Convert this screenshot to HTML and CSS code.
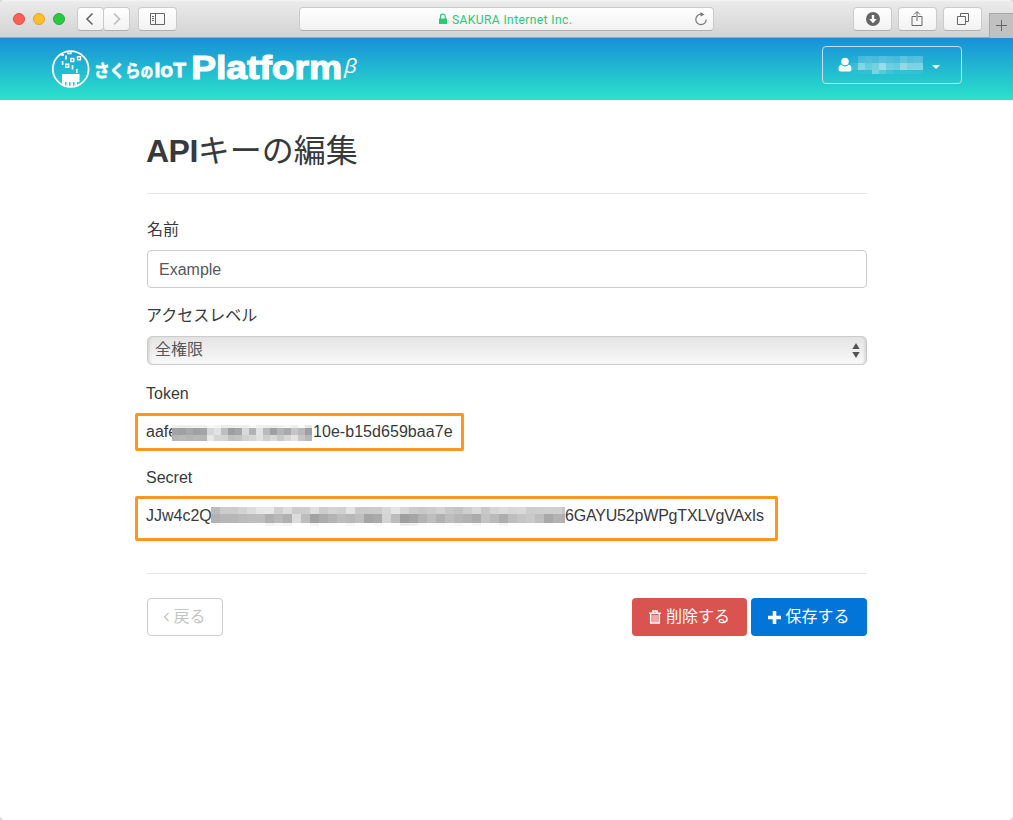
FILE: index.html
```html
<!DOCTYPE html>
<html lang="ja">
<head>
<meta charset="utf-8">
<title>APIキーの編集</title>
<link rel="stylesheet" href="styles.css">
</head>
<body>
<div class="window">
  <div class="toolbar">
    <div class="lights"><i class="light red"></i><i class="light amber"></i><i class="light green"></i></div>
    <div class="history">
      <span class="tool nav"><svg width="24" height="22"><path d="M14.500 5.500 9 11l5.500 5.500" fill="none" stroke="#666" stroke-width="1.600"/></svg></span>
      <span class="tool nav"><svg width="24" height="22"><path d="M10 5.500 15.500 11 10 16.500" fill="none" stroke="#bbb" stroke-width="1.600"/></svg></span>
    </div>
    <span class="tool"><svg width="37" height="22"><g fill="none" stroke="#666"><path d="M11.500 5.500h14v11h-14zM16.500 5.500v11M13 8.500h2M13 10.500h2M13 12.500h2"/></g></svg></span>
    <div class="address">
      <svg width="10" height="12" class="lock"><path d="M2.500 6V3.500a2.400 2.400 0 0 1 4.800 0V6" fill="none" stroke="#28c878" stroke-width="1.200"/><path d="M1 5.500h8V11H1z" fill="#28c878"/></svg>
      <span>SAKURA Internet Inc.</span>
      <svg width="14" height="14" class="reload"><path d="M7 2.200a5.200 5.200 0 1 0 5.200 5.200" fill="none" stroke="#777" stroke-width="1.200"/><path d="M6.500 0v4.600L10.500 2.400z" fill="#777"/></svg>
    </div>
    <div class="actions">
      <span class="tool"><svg width="37" height="22"><circle cx="19" cy="11" r="7" fill="#666"/><path d="M17.800 7h2.400v4h2.600L19 15.200 15.200 11h2.600z" fill="#fff"/></svg></span>
      <span class="tool"><svg width="37" height="22"><path d="M17 8.500h-4v9h10v-9h-4M18 13V4M15 6.500l3-3 3 3" fill="none" stroke="#666"/></svg></span>
      <span class="tool"><svg width="37" height="22"><path d="M13.500 8.500h8v8h-8zM16.500 8.500v-3h8v8h-3" fill="none" stroke="#666"/></svg></span>
    </div>
    <span class="newtab"><svg width="24" height="24"><path d="M6 11.500h11M11.500 6v11" stroke="#666" fill="none"/></svg></span>
  </div>

  <header class="site-header">
    <svg class="logo" width="310" height="42" viewBox="50 48 310 42">
      <clipPath id="disc"><circle cx="70.700" cy="69" r="18"/></clipPath>
      <g clip-path="url(#disc)" fill="#fff">
        <path d="M62 74h17.500v8H77v5h-2.500v-5H73v5h-2.500v-5H69v5h-2.500v-5H65v5h-2.500l-.500-5z"/>
        <path d="M61.800 61h1.600v4h-1.600zM65 55.500h1.800v4H65zM71.700 65h1.600v4.500h-1.600zM76 69h1.600v4H76z"/>
        <path d="M61 54h3v1.800h-3z"/>
      </g>
      <g clip-path="url(#disc)" fill="none" stroke="#fff" stroke-width="1.400"><path d="M65.700 64.200h3v3h-3zM70.800 58.500h3v3h-3zM77.500 56.700h3v3h-3zM68 50.500h3v3h-3z"/></g>
      <circle cx="70.700" cy="69" r="17.900" fill="none" stroke="#fff" stroke-width="1.800"/>
      <g fill="#fff">
        <text class="logo-jp" x="94" y="77" font-size="17" textLength="59" lengthAdjust="spacingAndGlyphs">さくら<tspan font-size="13.500">の</tspan></text>
        <text class="logo-iot" x="154.500" y="77" font-size="20.500" textLength="31.500" lengthAdjust="spacingAndGlyphs">IoT</text>
        <text class="logo-name" x="191.200" y="79.300" font-size="34" textLength="151" lengthAdjust="spacingAndGlyphs">Platform</text>
        <text class="logo-beta" x="344" y="73" font-size="20" textLength="13" lengthAdjust="spacingAndGlyphs">β</text>
      </g>
    </svg>
    <div class="account">
      <svg width="14" height="16"><circle cx="7" cy="4.500" r="3.800" fill="#fff"/><path d="M3.300 7.500C1 8 .500 10 .500 12.500q0 2 2 2h9q2 0 2-2C13.500 10 13 8 10.700 7.500 9 10 5 10 3.300 7.500z" fill="#fff"/></svg>
      <svg class="mosaic" data-mosaic="user" width="72" height="19"></svg>
      <i class="caret"></i>
    </div>
  </header>

  <main class="content">
    <h1><b>API</b>キーの編集</h1>
    <form class="fields">
      <label class="label jp">名前</label>
      <div class="input">Example</div>
      <label class="label jp level">アクセスレベル</label>
      <div class="select"><span>全権限</span><svg width="8" height="15"><path d="M4 0l3.700 6H.300zM.300 9h7.400L4 15z" fill="#555"/></svg></div>
      <label class="label token-label">Token</label>
      <div class="code token"><span class="head">aafe</span><svg class="mosaic" data-mosaic="token" width="140" height="16"></svg><span class="tail">10e-b15d659baa7e</span></div>
      <label class="label secret-label">Secret</label>
      <div class="code secret"><span class="head">JJw4c2Q</span><svg class="mosaic" data-mosaic="secret" width="354" height="20"></svg><span class="tail">6GAYU52pWPgTXLVgVAxIs</span></div>
    </form>
    <div class="buttons">
      <a class="btn back"><svg width="7" height="12"><path d="M5.500 2 1.500 6l4 4" fill="none" stroke="#c4c4c4" stroke-width="1.300"/></svg>戻る</a>
      <a class="btn delete"><svg width="12" height="14"><path d="M4 2.500V1h4v1.500M0 3.300h12M1.700 4v9h8.600V4" fill="none" stroke="#fff" stroke-width="1.500"/><path d="M4 5v7M6 5v7M8 5v7" stroke="#fff" stroke-width="1"/></svg>削除する</a>
      <a class="btn save"><svg width="13" height="13"><path d="M6.500 0v13M0 6.500h13" stroke="#fff" stroke-width="3.600"/></svg>保存する</a>
    </div>
  </main>
</div>
<script src="mosaic.js"></script>
</body>
</html>
```
FILE: styles.css
```css
* { box-sizing: border-box; }
body {
  margin: 0;
  background: #d8d8d8;
  color: #373a3c;
  font: 16px/24px "Liberation Sans", "Noto Sans CJK JP", sans-serif;
}
svg { display: block; flex: none; }
.window {
  height: 820px;
  background: #fff;
  border-radius: 5px;
  overflow: hidden;
}
.toolbar {
  display: flex;
  align-items: flex-start;
  height: 38px;
  padding: 7px 0 0 13px;
  background: linear-gradient(#f6f6f6 0, #eaeaeb 2px, #d3d3d3 37px);
  border-bottom: 1px solid #a6a6a8;
}
.lights { display: flex; gap: 8px; padding-top: 6px; width: 64px; }
.light { width: 12px; height: 12px; border-radius: 50%; border: 1px solid; }
.red { background: #ff5f57; border-color: #e24b42; }
.amber { background: #ffbd2e; border-color: #e3a325; }
.green { background: #28ca41; border-color: #24ae35; }
.history { display: flex; width: 61px; }
.tool {
  height: 24px;
  border: 1px solid #cbcbcb;
  border-bottom-color: #b1b1b1;
  border-radius: 4px;
  background: linear-gradient(#fff, #f2f2f2);
  width: 39px;
}
.nav { width: 27px; }
.nav + .nav { margin-left: -1px; }
.address {
  display: flex;
  align-items: center;
  width: 415px;
  height: 24px;
  margin-left: 122px;
  padding: 0 5px 0 138px;
  border: 1px solid #cbcbcb;
  border-bottom-color: #b1b1b1;
  border-radius: 4px;
  background: linear-gradient(#fff, #f2f2f2);
  color: #28c878;
  font: 12px/20px Roboto, sans-serif;
  letter-spacing: .42px;
  white-space: nowrap;
}
.address span { padding-top: 1px; }
.lock { margin-right: 4px; }
.reload { margin-left: auto; }
.actions { display: flex; gap: 6px; margin-left: 139px; }
.newtab {
  width: 24px;
  height: 25px;
  margin: 6px 0 0 auto;
  border: solid #a8a8a8;
  border-width: 1px 0 0 1px;
  background: #c1c1c1;
}
.site-header {
  display: flex;
  justify-content: space-between;
  height: 62px;
  padding: 8px 51px 0 50px;
  background: linear-gradient(#188fd9, #2be3c9);
}
.logo { margin-top: 2px; }
.logo-jp { font-family: "Noto Sans CJK JP", sans-serif; font-weight: 700; stroke: #fff; stroke-width: .7px; }
.logo-iot, .logo-name { font-family: "Liberation Sans", sans-serif; font-weight: 700; stroke: #fff; }
.logo-iot { stroke-width: .8px; }
.logo-name { stroke-width: 1.2px; }
.logo-beta { font-family: "Open Sans", sans-serif; font-style: italic; }
.account {
  display: flex;
  align-items: center;
  width: 140px;
  height: 38px;
  padding-left: 15px;
  border: 1px solid #c5dfe4;
  border-radius: 4px;
}
.account .mosaic { margin: 1px 9px 0 -1px; }
.caret { border: 4px solid transparent; border-top-color: #fff; border-bottom: 0; margin-top: 3px; }
.content { width: 720px; margin: 0 0 0 147px; }
h1 {
  margin: 0;
  height: 94px;
  padding-top: 32px;
  border-bottom: 1px solid #e5e5e5;
  font-size: 32px;
  line-height: 38px;
  font-weight: 400;
}
h1 b { margin-left: -1px; letter-spacing: -.5px; }
.fields { height: 380px; border-bottom: 1px solid #e5e5e5; padding-top: 24px; }
.label { display: block; margin-left: -1px; }
.jp { margin-left: 0; }
.input {
  height: 38px;
  margin-top: 8px;
  padding: 7px 11px;
  border: 1px solid #ccc;
  border-radius: 4px;
  color: #55595c;
}
.level { margin: 16px 0 0 -1px; }
.select {
  display: flex;
  justify-content: space-between;
  align-items: center;
  height: 29px;
  margin-top: 8px;
  padding: 0 6px 2px 7px;
  border: 1px solid #ccc;
  border-radius: 5px;
  background: linear-gradient(#e4e4e4, #f9f9f9);
  box-shadow: inset 3px 0 3px -2px #ccc, inset -3px 0 3px -2px #ccc;
  color: #55595c;
}
.select svg { margin-top: 2px; }
.token-label { margin-top: 17px; }
.code {
  display: flex;
  margin-left: -12px;
  padding-left: 8px;
  border: 3px solid #ff961e;
  border-radius: 2px;
  white-space: nowrap;
}
.head { flex: none; }
.token { width: 329px; height: 38px; margin-top: 7px; padding-top: 4px; }
.token .head { width: 26px; }
.token .mosaic { margin-top: 5px; }
.token .tail { padding-left: 1px; letter-spacing: .05px; }
.secret-label { margin-top: 15px; }
.secret { width: 643px; height: 45px; margin-top: 6px; padding-top: 5px; }
.secret .head { width: 65px; }
.secret .mosaic { margin-top: 3px; }
.secret .tail { letter-spacing: -.19px; }
.buttons { display: flex; gap: 4px; padding-top: 24px; }
.btn {
  display: flex;
  align-items: center;
  justify-content: center;
  gap: 5px;
  height: 38px;
  border-radius: 4px;
  color: #fff;
}
.back { width: 76px; gap: 3px; padding-right: 1px; margin-right: auto; border: 1px solid #ccc; color: #c4c4c4; }
.delete { width: 115px; background: #d9534f; }
.save { width: 116px; gap: 4px; background: #0275d8; }
```
FILE: mosaic.js
```js
// Pixelated masks: each row is [top, height, cell shades], cells share one width.
const masks = {
  token: { cell: 7, rows: [
    [0, 3, "f0 ed ef f2 ef f9 f5 eb ee f1 ed f8 f1 ee ee f1 f8 ee fb e6"],
    [3, 7, "a3 a0 a8 a0 a4 d6 e2 be 9e a6 d9 b2 e2 b9 a0 b5 a9 c5 b9 9f"],
    [10, 6, "b6 b9 b5 b8 b6 e8 d5 d3 c1 c4 d1 d6 e0 ce d8 c8 d7 e3 c6 b8"]
  ]},
  secret: { cell: 9, rows: [
    [0, 7, "bc cc cc d3 dc e6 e8 d0 dd cc cd df cc d3 d0 e4 ca ca cb d7 e5 d7 cc c8 cc d3 c8 c4 ce d8 c8 d5 dc d7 d9 cc ce cf d0 c6"],
    [7, 9, "b2 b7 b7 bb bd be b0 b9 b0 dc bd a2 ac b4 bd b8 bf a5 aa d4 bc 9f a5 b3 be b1 be b7 b2 ac c3 ba ad be c5 c9 be a9 b3 af"],
    [16, 3, "fa ff ff ff ff ff f3 fa f5 ff ff f4 ff ff ff f7 ff ff f9 ff ff ef f1 fa ff f9 ff f9 ff f7 ff ff f5 ff ff ff fd ff ff ff"]
  ]},
  user: { cell: 7, alpha: true, rows: [
    [0, 7, "08 30 38 30 40 38 30 48 38 40 3a 08"],
    [7, 7, "20 70 50 60 88 58 50 80 68 68 70 10"],
    [14, 4, "08 10 10 60 38 20 10 14 14 10 10 00"]
  ]}
};
document.querySelectorAll("[data-mosaic]").forEach(svg => {
  const { cell, rows, alpha } = masks[svg.dataset.mosaic];
  rows.forEach(([y, h, shades]) => shades.split(" ").forEach((s, i) => {
    const r = document.createElementNS("http://www.w3.org/2000/svg", "rect");
    const fill = alpha ? "#ffffff" + s : "#" + s + s + s;
    Object.entries({ x: i * cell, y, width: cell, height: h, fill, "shape-rendering": "crispEdges" })
      .forEach(([k, v]) => r.setAttribute(k, v));
    svg.append(r);
  }));
});
```
